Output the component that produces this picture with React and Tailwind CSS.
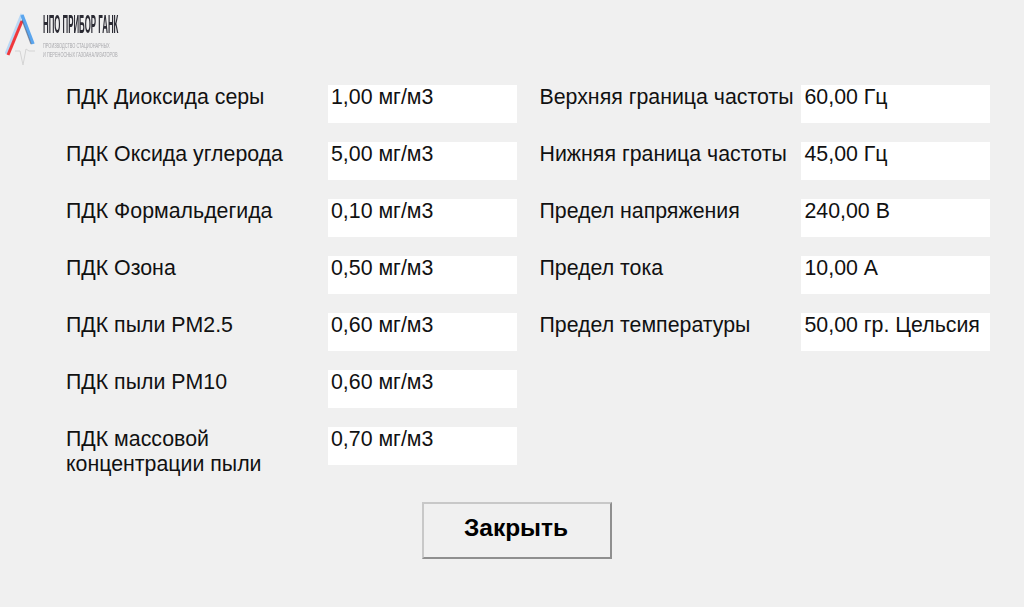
import React from 'react'

const leftRows = [
  ['ПДК Диоксида серы', '1,00 мг/м3'],
  ['ПДК Оксида углерода', '5,00 мг/м3'],
  ['ПДК Формальдегида', '0,10 мг/м3'],
  ['ПДК Озона', '0,50 мг/м3'],
  ['ПДК пыли PM2.5', '0,60 мг/м3'],
  ['ПДК пыли PM10', '0,60 мг/м3'],
  ['ПДК массовой концентрации пыли', '0,70 мг/м3'],
]

const rightRows = [
  ['Верхняя граница частоты', '60,00 Гц'],
  ['Нижняя граница частоты', '45,00 Гц'],
  ['Предел напряжения', '240,00 В'],
  ['Предел тока', '10,00 А'],
  ['Предел температуры', '50,00 гр. Цельсия'],
]

function Logo() {
  return (
    <div className="flex h-[70px] items-start pl-[5px] pt-[12px]">
      <svg className="h-[56px] w-[36px] shrink-0 blur-[0.6px]" viewBox="0 0 36 56" fill="none">
        <path d="M17 2L1 42" stroke="#b9d8f5" strokeWidth="3" />
        <path d="M3 43L17 9" stroke="#f0383c" strokeWidth="3" />
        <path d="M17 3L28 32" stroke="#5aa5ee" strokeWidth="3.5" />
        <path d="M17 8L26 32" stroke="#3a4560" strokeWidth="1.2" opacity="0.55" />
        <path d="M10 39H15L18 53L21 37L24 39H30" stroke="#d4d4d4" strokeWidth="1" />
      </svg>
      <div className="ml-[2px] flex w-[76px] flex-col overflow-visible font-['Liberation_Sans',sans-serif] blur-[0.4px]">
        <span className="origin-left scale-x-[0.314] whitespace-nowrap text-[25px] font-bold leading-[24px] text-[#2a2a33]">
          НПО ПРИБОР ГАНК
        </span>
        <span className="mt-[5px] origin-left scale-x-[0.56] whitespace-nowrap text-[7px] leading-[9px] text-[#a9a9ad]">
          ПРОИЗВОДСТВО СТАЦИОНАРНЫХ
        </span>
        <span className="origin-left scale-x-[0.56] whitespace-nowrap text-[7px] leading-[9px] text-[#a9a9ad]">
          И ПЕРЕНОСНЫХ ГАЗОАНАЛИЗАТОРОВ
        </span>
      </div>
    </div>
  )
}

function Row({ label, value, labelWidth, valuePad }) {
  return (
    <div className="flex min-h-[38px] items-start">
      <div className={`${labelWidth} shrink-0 leading-[25px]`}>{label}</div>
      <div className={`${valuePad} h-[38px] w-[189px] shrink-0 bg-white leading-[25px] whitespace-nowrap`}>{value}</div>
    </div>
  )
}

export default function App() {
  return (
    <div className="h-[607px] w-[1024px] overflow-hidden bg-[#f0f0f0] font-['Liberation_Sans',Arial,sans-serif] text-[21.33px] text-[#111]">
      <Logo />
      <div className="mt-[15px] flex pl-[66px]">
        <div className="flex w-[473.5px] flex-col gap-[19px]">
          {leftRows.map(([label, value]) => (
            <Row key={label} label={label} value={value} labelWidth="w-[262px]" valuePad="pl-[3px]" />
          ))}
        </div>
        <div className="flex flex-col gap-[19px]">
          {rightRows.map(([label, value]) => (
            <Row key={label} label={label} value={value} labelWidth="w-[261.5px]" valuePad="pl-[3.5px]" />
          ))}
        </div>
      </div>
      <div className="mt-[25px] flex justify-center">
        <button className="ml-[10px] h-[57px] w-[190px] border-2 border-[#c8c8c8] border-r-[#8f8f8f] border-b-[#8f8f8f] bg-[#f0f0f0] pb-[4px] pr-[2px] text-[24.5px] font-bold text-black">
          Закрыть
        </button>
      </div>
    </div>
  )
}
